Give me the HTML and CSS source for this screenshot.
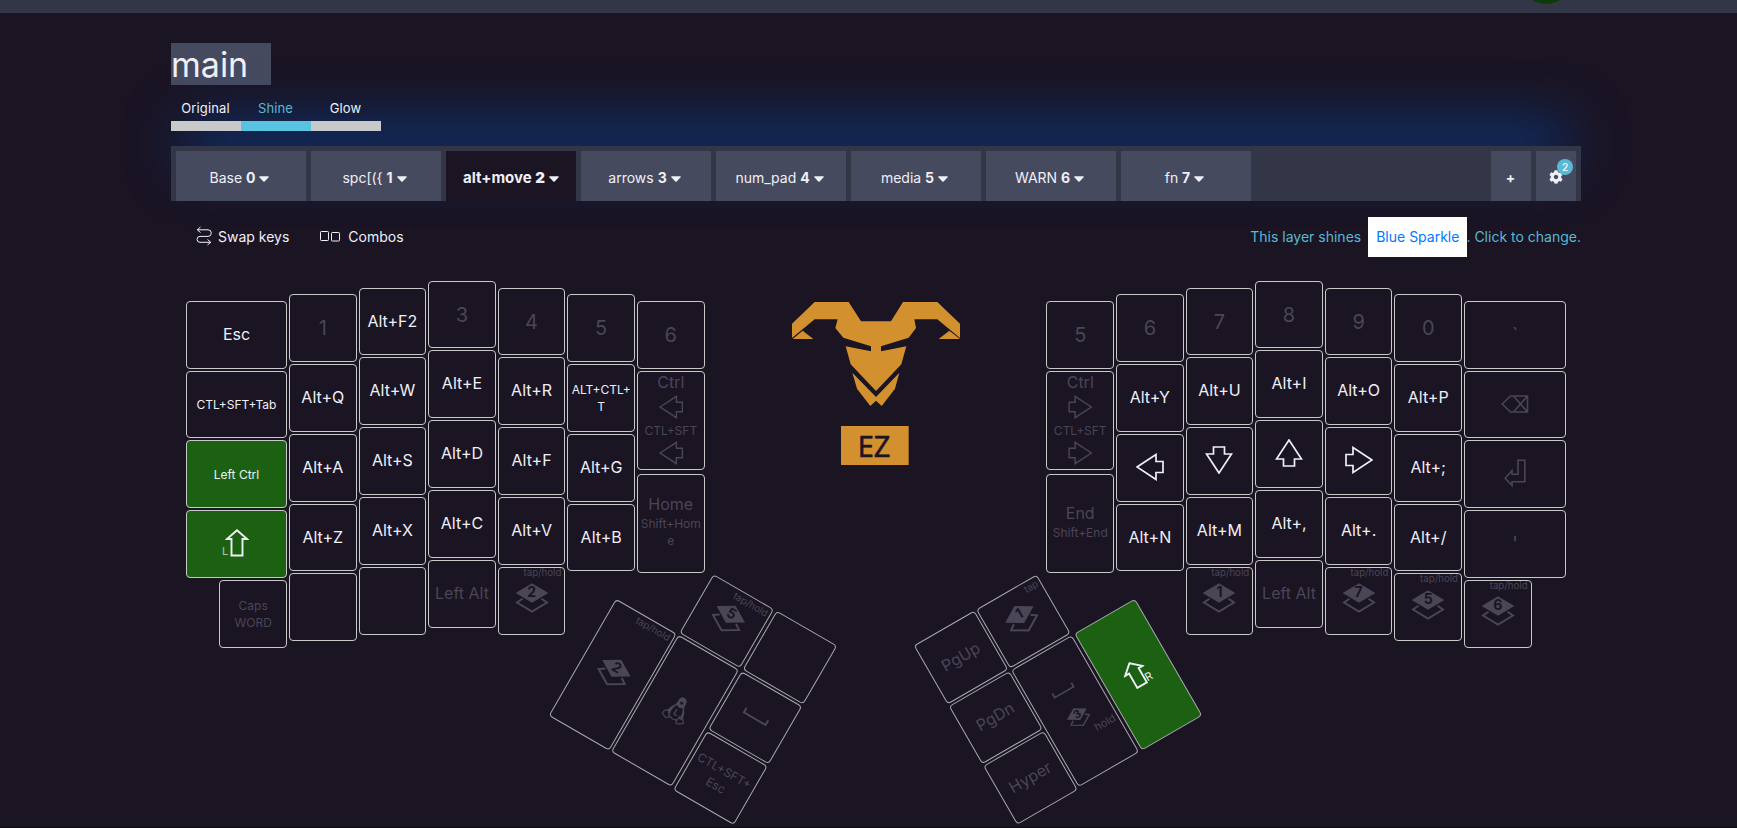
FILE: index.html
```html
<!DOCTYPE html>
<html lang="en">
<head>
<meta charset="utf-8">
<title>Layout editor</title>
<link rel="stylesheet" href="styles.css">
</head>
<body>
<svg class="defs" width="0" height="0">
  <symbol id="arrow" viewBox="0 0 28 28"><path d="M1 14 20 1.5V8.500H27V19.500H20V26.500Z"/></symbol>
  <symbol id="shift" viewBox="0 0 24 28"><path d="M12 1.200 22 10H17.500V26.500H6.500V10H2Z"/></symbol>
  <symbol id="layer" viewBox="0 0 34 30"><path class="solid" d="M17 .2 33.400 10 17 19.800.6 10Z"/><path d="M7.500 15.700 2 19.500 17 28.500 32 19.500 26.500 15.700"/></symbol>
  <symbol id="space" viewBox="0 0 28 8"><path d="M1.500 1V6.500H26.500V1"/></symbol>
  <symbol id="caret" viewBox="0 0 10 6"><path class="solid" d="M.8.3H9.200Q10.200.5 9.600 1.300L5.700 5.500Q5 6 4.300 5.500L.4 1.300Q-.2.5.8.3Z"/></symbol>
</svg>
<header class="topbar"><span class="avatar"></span></header>
<main class="page">
  <h1 class="title">main</h1>
  <div class="modes">
    <div class="mode">Original</div><div class="mode mode-on">Shine</div><div class="mode">Glow</div>
  </div>
  <nav class="layers">
    <div class="layer">Base&nbsp;<b>0</b><svg class="caret"><use href="#caret"/></svg></div>
    <div class="layer">spc[({&nbsp;<b>1</b><svg class="caret"><use href="#caret"/></svg></div>
    <div class="layer layer-on">alt+move&nbsp;<b>2</b><svg class="caret"><use href="#caret"/></svg></div>
    <div class="layer">arrows&nbsp;<b>3</b><svg class="caret"><use href="#caret"/></svg></div>
    <div class="layer">num_pad&nbsp;<b>4</b><svg class="caret"><use href="#caret"/></svg></div>
    <div class="layer">media&nbsp;<b>5</b><svg class="caret"><use href="#caret"/></svg></div>
    <div class="layer">WARN&nbsp;<b>6</b><svg class="caret"><use href="#caret"/></svg></div>
    <div class="layer">fn&nbsp;<b>7</b><svg class="caret"><use href="#caret"/></svg></div>
    <div class="tool tool-first"><b>+</b></div>
    <div class="tool">
      <svg class="gear" viewBox="0 0 512 512"><path d="M487.400 315.700l-42.600-24.600c4.300-23.200 4.300-47 0-70.200l42.600-24.600c4.900-2.800 7.100-8.600 5.500-14-11.100-35.600-30-67.800-54.700-94.600-3.800-4.100-10-5.100-14.800-2.300L380.800 110c-17.900-15.400-38.500-27.300-60.800-35.100V25.800c0-5.600-3.900-10.500-9.400-11.700-36.700-8.200-74.300-7.800-109.200 0-5.500 1.200-9.400 6.100-9.400 11.700V75c-22.200 7.900-42.800 19.800-60.800 35.100L88.700 85.500c-4.900-2.800-11-1.900-14.800 2.300-24.700 26.700-43.600 58.900-54.700 94.600-1.700 5.400.6 11.200 5.500 14L67.300 221c-4.300 23.200-4.300 47 0 70.200l-42.600 24.600c-4.900 2.800-7.100 8.600-5.500 14 11.100 35.600 30 67.800 54.700 94.600 3.800 4.100 10 5.100 14.800 2.300l42.600-24.600c17.900 15.400 38.500 27.300 60.800 35.100v49.200c0 5.600 3.900 10.500 9.400 11.700 36.700 8.200 74.300 7.800 109.200 0 5.500-1.200 9.400-6.100 9.400-11.700v-49.200c22.200-7.900 42.800-19.800 60.800-35.100l42.600 24.600c4.900 2.800 11 1.900 14.800-2.300 24.700-26.700 43.600-58.900 54.700-94.600 1.500-5.500-.7-11.300-5.600-14.100zM256 336c-44.100 0-80-35.900-80-80s35.900-80 80-80 80 35.900 80 80-35.900 80-80 80z"/></svg>
      <span class="badge">2</span>
    </div>
  </nav>
  <div class="actions">
    <div class="action">
      <svg class="icon" width="16" height="20" viewBox="0 0 16 20"><path d="M4.500 1 1.200 3.800 4.500 6.500M1.500 3.800H12a3.300 3.300 0 0 1 0 6.600H4a2.900 2.900 0 0 0 0 5.900H14.500M11.500 13.500 14.800 16.300 11.500 19"/></svg>
      <span>Swap keys</span>
    </div>
    <div class="action action-combos">
      <svg class="icon" width="20" height="11" viewBox="0 0 20 11"><rect x=".5" y=".5" width="8" height="9" rx=".8"/><rect x="11.500" y="1.500" width="8" height="8.500" rx=".8"/></svg>
      <span>Combos</span>
    </div>
    <div class="shine"><span>This layer shines</span><span class="effect"><span>Blue Sparkle</span></span><span>. Click to change.</span></div>
  </div>

  <section class="board">
    <div class="half">
      <div class="col drop3 wide">
        <div class="key"><span>Esc</span></div>
        <div class="key sm"><span>CTL+SFT+Tab</span></div>
        <div class="key sm green"><span>Left Ctrl</span></div>
        <div class="key green"><div class="mod"><small>L</small><svg class="shift"><use href="#shift"/></svg></div></div>
        <div class="key sm dim narrow end"><span>Caps<br>WORD</span></div>
      </div>
      <div class="col drop2">
        <div class="key num dim"><span>1</span></div>
        <div class="key"><span>Alt+Q</span></div>
        <div class="key"><span>Alt+A</span></div>
        <div class="key"><span>Alt+Z</span></div>
        <div class="key"></div>
      </div>
      <div class="col drop1">
        <div class="key"><span>Alt+F2</span></div>
        <div class="key"><span>Alt+W</span></div>
        <div class="key"><span>Alt+S</span></div>
        <div class="key"><span>Alt+X</span></div>
        <div class="key"></div>
      </div>
      <div class="col">
        <div class="key num dim"><span>3</span></div>
        <div class="key"><span>Alt+E</span></div>
        <div class="key"><span>Alt+D</span></div>
        <div class="key"><span>Alt+C</span></div>
        <div class="key dim"><span>Left Alt</span></div>
      </div>
      <div class="col drop1">
        <div class="key num dim"><span>4</span></div>
        <div class="key"><span>Alt+R</span></div>
        <div class="key"><span>Alt+F</span></div>
        <div class="key"><span>Alt+V</span></div>
        <div class="key dim"><i class="hint">tap/hold</i><div class="stack"><svg><use href="#layer"/></svg><b>2</b></div></div>
      </div>
      <div class="col drop2">
        <div class="key num dim"><span>5</span></div>
        <div class="key sm"><span>ALT+CTL+<br>T</span></div>
        <div class="key"><span>Alt+G</span></div>
        <div class="key"><span>Alt+B</span></div>
      </div>
      <div class="col drop3">
        <div class="key num dim"><span>6</span></div>
        <div class="key tall dim pair"><span>Ctrl</span><svg class="arrow"><use href="#arrow"/></svg><span class="s12">CTL+SFT</span><svg class="arrow"><use href="#arrow"/></svg></div>
        <div class="key tall dim two"><span>Home</span><span class="s12">Shift+Hom<br>e</span></div>
      </div>
    </div>

    <svg class="logo" viewBox="30 33 510 495">
      <path d="M33 101 101 36H203L240 94H330L366 36H469L537 101V144L469 88H400L405 114 383 143 300 169V184L376 169 361 223 285 303 209 223 194 169 270 184V169L187 143 163 114 170 88H101L33 144ZM35 147 65 122 97 147ZM473 147 505 122 537 147ZM214 248 285 321 355 248 342 296 302 348 285 332 268 348 228 296ZM180 408H383V525H180Z"/>
      <text x="230" y="501" textLength="98" lengthAdjust="spacingAndGlyphs">EZ</text>
    </svg>

    <div class="half">
      <div class="col drop3">
        <div class="key num dim"><span>5</span></div>
        <div class="key tall dim pair"><span>Ctrl</span><svg class="arrow right"><use href="#arrow"/></svg><span class="s12">CTL+SFT</span><svg class="arrow right"><use href="#arrow"/></svg></div>
        <div class="key tall dim two"><span>End</span><span class="s12">Shift+End</span></div>
      </div>
      <div class="col drop2">
        <div class="key num dim"><span>6</span></div>
        <div class="key"><span>Alt+Y</span></div>
        <div class="key"><svg class="arrow"><use href="#arrow"/></svg></div>
        <div class="key"><span>Alt+N</span></div>
      </div>
      <div class="col drop1">
        <div class="key num dim"><span>7</span></div>
        <div class="key"><span>Alt+U</span></div>
        <div class="key"><svg class="arrow down"><use href="#arrow"/></svg></div>
        <div class="key"><span>Alt+M</span></div>
        <div class="key dim"><i class="hint">tap/hold</i><div class="stack"><svg><use href="#layer"/></svg><b>1</b></div></div>
      </div>
      <div class="col">
        <div class="key num dim"><span>8</span></div>
        <div class="key"><span>Alt+I</span></div>
        <div class="key"><svg class="arrow up"><use href="#arrow"/></svg></div>
        <div class="key"><span>Alt+,</span></div>
        <div class="key dim"><span>Left Alt</span></div>
      </div>
      <div class="col drop1">
        <div class="key num dim"><span>9</span></div>
        <div class="key"><span>Alt+O</span></div>
        <div class="key"><svg class="arrow right"><use href="#arrow"/></svg></div>
        <div class="key"><span>Alt+.</span></div>
        <div class="key dim"><i class="hint">tap/hold</i><div class="stack"><svg><use href="#layer"/></svg><b>7</b></div></div>
      </div>
      <div class="col drop2">
        <div class="key num dim"><span>0</span></div>
        <div class="key"><span>Alt+P</span></div>
        <div class="key"><span>Alt+;</span></div>
        <div class="key"><span>Alt+/</span></div>
        <div class="key dim"><i class="hint">tap/hold</i><div class="stack"><svg><use href="#layer"/></svg><b>5</b></div></div>
      </div>
      <div class="col drop3 wide wide-right">
        <div class="key num dim"><span>`</span></div>
        <div class="key dim"><svg class="line" width="28" height="18" viewBox="0 0 28 18"><path d="M1.200 9 9.500 1H26.500V17H9.500ZM12.500 1 26.500 17M26.500 1 12.500 17"/></svg></div>
        <div class="key dim"><svg class="line" width="22" height="28" viewBox="0 0 22 28"><path d="M14 1.200H20.800V22.800H8V26.500L1.200 19.200 8 11.500V15.300H14Z"/></svg></div>
        <div class="key num dim"><span>'</span></div>
        <div class="key dim narrow"><i class="hint">tap/hold</i><div class="stack"><svg><use href="#layer"/></svg><b>6</b></div></div>
      </div>
    </div>
  </section>

  <section class="thumbs">
    <div class="cluster cluster-left">
      <div class="key dim c2"><i class="hint">tap/hold</i><div class="stack"><svg><use href="#layer"/></svg><b>5</b></div></div>
      <div class="key c3"></div>
      <div class="key dim c1 long"><i class="hint">tap/hold</i><div class="stack"><svg><use href="#layer"/></svg><b>2</b></div></div>
      <div class="key dim c2 long">
        <svg class="penguin" width="26" height="28" viewBox="0 0 26 28">
          <path class="solid" fill-rule="evenodd" d="M13 .5C9.800.5 8.600 3 8.800 6.200 9 9.500 7.800 10.800 6.300 13.200 5 15.400 4.600 17.600 4.400 19.200L8.500 22.500C6.900 17.500 8 13.500 9.800 10.600L13 12 16.300 10.400C18 13 19.500 17.500 18.100 21.500L21.500 20C21.800 16.500 20.500 13.800 18.700 11.500 17.300 9.700 17.300 8.300 17.200 5.700 17 2.300 15.500.5 13 .5ZM10.800 6.200 13 5.300 15.300 6.300 13 8.300Z"/>
          <path d="M4.500 18.800 8.800 24.200C9 26.500 7 27.200 5 26.400L1.500 25.200C.8 24.500 1.600 23.500 1.500 22 1.300 20.500 3.600 20.800 4.500 18.800ZM18 19.500C19 21.500 21 21.200 21.800 19.800 22.500 21.800 24.800 22.500 24.500 23.500L20.500 26.200C18.500 27.500 17 26.500 17.200 24.500ZM9 23.500C11.500 25.200 14.500 25.200 17 23.500"/>
          <text x="10.300" y="20.500">L</text>
        </svg>
      </div>
      <div class="key dim c3"><svg class="space" width="28" height="8"><use href="#space"/></svg></div>
      <div class="key sm dim c3"><span>CTL+SFT+<br>Esc</span></div>
    </div>
    <div class="cluster cluster-right">
      <div class="key dim c1"><span>PgUp</span></div>
      <div class="key dim c2"><i class="hint">tap</i><div class="stack"><svg><use href="#layer"/></svg><b>1</b></div></div>
      <div class="key dim c1"><span>PgDn</span></div>
      <div class="key dim c2 long combo"><svg class="space" width="26" height="7"><use href="#space"/></svg><div class="stack stack-sm"><svg><use href="#layer"/></svg><b>3</b></div><i class="hold">hold</i></div>
      <div class="key green c3 long"><div class="mod mod-right"><svg class="shift"><use href="#shift"/></svg><small>R</small></div></div>
      <div class="key dim c1"><span>Hyper</span></div>
    </div>
  </section>
</main>
</body>
</html>
```

FILE: styles.css
```css
* { box-sizing: border-box; }
html { overflow: hidden; }
body {
  margin: 0;
  height: 828px;
  overflow: hidden;
  border-bottom: 1px solid #0d0a14;
  background: #1a1423;
  color: #efeff8;
  font-family: Inter, "Liberation Sans", sans-serif;
  font-size: 14px;
}
svg { display: block; fill: none; stroke: currentColor; overflow: visible; }
.defs { position: absolute; }
.solid { fill: currentColor; stroke: none; }

.topbar { position: relative; height: 13px; background: #333647; overflow: hidden; }
.avatar {
  position: absolute; left: 1521px; top: -46px;
  width: 50px; height: 50px; border-radius: 50%; background: #0d3a0b;
}
.page { width: 1410px; margin-left: 171px; padding-top: 30px; }
.title {
  margin: 0; width: 100px; height: 42px; padding-top: 1px;
  background: #464a5e; font-size: 34px; font-weight: 400; line-height: 42px;
}
.modes { display: flex; margin-top: 15px; }
.mode {
  width: 70px; height: 31px; border-bottom: 10px solid #c8c9ca;
  text-align: center; font-size: 13px; letter-spacing: .15px; line-height: 17px; padding-right: 1px;
}
.mode-on { color: #59b9d3; border-color: #59c4e2; }

.layers {
  display: flex; gap: 5px; height: 55px; margin-top: 15px; padding: 5px 5px 0;
  background: #333647;
  box-shadow: 0 -30px 60px -15px #044caf;
}
.layer {
  display: flex; align-items: center; justify-content: center;
  width: 130px; height: 50px; padding: 3px 3px 0 0; background: #464a5e;
}
.layer-on { background: #1a1423; font-size: 15px; font-weight: 700; padding: 2px 0 0; }
.caret { width: 10px; height: 6px; margin: 3px 0 0 4px; }
.tool {
  position: relative; display: flex; align-items: center; justify-content: center;
  width: 40px; height: 50px; background: #464a5e; padding: 2px 1px 0 0;
}
.tool-first { margin-left: auto; }
.gear { width: 14px; height: 14px; fill: currentColor; stroke: none; }
.badge {
  position: absolute; left: 21px; top: 8px; width: 16px; height: 16px; border-radius: 50%;
  background: #59b9d3; font-size: 10px; font-weight: 600; line-height: 17px; text-align: center;
}
.actions { display: flex; align-items: center; height: 40px; margin-top: 16px; padding-left: 25px; }
.action { display: flex; align-items: center; gap: 6px; padding-bottom: 2px; }
.action-combos { margin-left: 31px; gap: 8px; }
.icon { stroke-width: 1; }
.shine { display: flex; align-items: center; margin-left: auto; color: #59b9d3; }
.shine > span:not(.effect), .effect > span { padding-bottom: 2px; }
.effect {
  display: flex; align-items: center; height: 40px; padding: 0 8px; margin: 0 -1px 0 7px;
  background: #fff; color: #007bff;
}

.board { display: flex; align-items: flex-start; height: 369px; padding: 23.700px 15px 0; }
.half { display: flex; gap: 2px; }
.col { display: flex; flex-direction: column; gap: 2px; width: 67.600px; }
.wide { width: 101px; }
.wide-right { width: 102px; }
.drop1 { padding-top: 7px; }
.drop2 { padding-top: 13.600px; }
.drop3 { padding-top: 20.200px; }
.key {
  position: relative;
  display: flex; align-items: center; justify-content: center;
  height: 67.800px; flex: none; padding-bottom: 2px;
  border: 1px solid #c8c8c8; border-radius: 4px;
  font-size: 16px; text-align: center; white-space: nowrap;
}
.narrow { width: 67.600px; }
.end { align-self: flex-end; }
.tall { height: 99px; }
.tall + .tall { margin-top: 2px; }
.sm { font-size: 12px; line-height: 17px; padding-bottom: 0; }
.s12 { font-size: 12px; line-height: 16px; }
.num { font-size: 20px; padding-bottom: 0; }
.dim > * { color: #4a4656; }
.green { background: #1b6111; }
.pair { flex-direction: column; justify-content: flex-start; gap: 3px; padding: 0; }
.pair span { line-height: 20px; }
.pair .s12 { line-height: 18px; margin-bottom: -2px; }
.two { flex-direction: column; padding-bottom: 4px; }
.two span { line-height: 22px; }
.two .s12 { line-height: 17px; }
.arrow { width: 28px; height: 28px; stroke-width: 1.700; }
.pair .arrow { width: 24.500px; height: 24px; }
.right { transform: scaleX(-1); }
.up { transform: rotate(90deg); }
.down { transform: rotate(-90deg); }
.line { stroke-width: 1.600; }
.shift { width: 24px; height: 28px; stroke-width: 1.900; }
.mod { display: flex; align-items: flex-end; margin-left: -4px; }
.mod small { font-size: 11px; line-height: 12px; margin-right: -3px; opacity: .7; }
.mod svg { margin-right: -2px; }
.mod-right { margin: 0 2px 0 0; }
.mod-right small { margin: 0 0 0 -3px; opacity: 1; }
.hint { position: absolute; right: 3px; top: -1px; font-size: 9.700px; font-style: normal; line-height: 12px; }
.stack { display: grid; place-items: center; width: 34px; height: 30px; margin-top: -3px; }
.stack > * { grid-area: 1 / 1; }
.stack svg { width: 34px; height: 30px; stroke-width: 2; }
.stack b { margin-top: -12px; color: #1a1423; font-size: 14px; line-height: 16px; }

.logo { width: 170px; height: 165px; margin: 20px auto 0; fill: #d3902f; stroke: none; }
.logo text { fill: #1a1423; stroke: #1a1423; stroke-width: 2px; font: 90px "Open Sans", "Noto Sans", sans-serif; }

.thumbs { display: flex; justify-content: space-between; height: 205px; margin-top: -48px; padding: 0 415.400px 0 414.400px; }
.cluster {
  display: grid; grid-template-columns: repeat(3, 70.100px); grid-auto-rows: 67.600px;
  gap: 2px 2.200px; flex: none; height: 206.800px;
}
.cluster .key { height: auto; border-color: #a9a8ad; }
.cluster .long { margin-bottom: 1.500px; }
.cluster-left { transform: rotate(30deg); }
.cluster-right { transform: rotate(-30deg); }
.cluster .hint { top: 1px; }
.c1 { grid-column: 1; }
.c2 { grid-column: 2; }
.c3 { grid-column: 3; }
.long { grid-row: 2 / span 2; }
.space { stroke-width: 2; }
.penguin { stroke-width: 1.200; margin: -2px 0 0 3px; }
.penguin text { font-size: 9px; font-weight: 700; fill: currentColor; stroke: none; }
.cluster .combo { flex-direction: column; gap: 20px; padding-bottom: 9px; }
.stack-sm { width: 24px; height: 21px; }
.stack-sm svg { width: 24px; height: 21px; }
.stack-sm b { font-size: 11px; margin-top: -8px; }
.hold { position: absolute; right: 3px; top: 84px; font-size: 11px; font-style: normal; }
```
